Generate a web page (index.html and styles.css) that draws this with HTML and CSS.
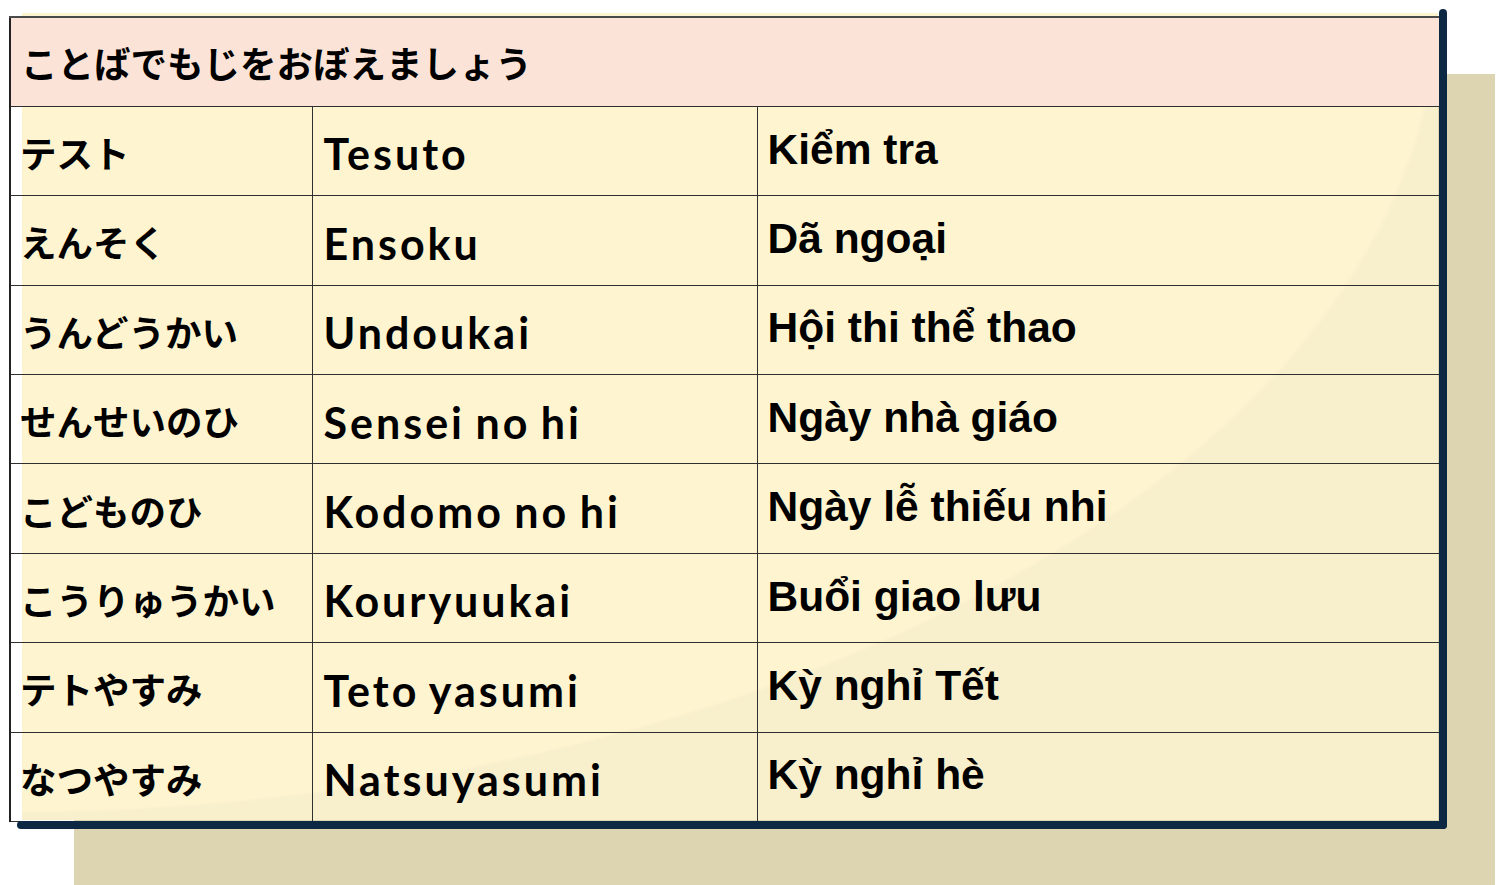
FILE: index.html
```html
<!DOCTYPE html>
<html lang="ja">
<head>
<meta charset="utf-8">
<title>ことばでもじをおぼえましょう</title>
<link rel="stylesheet" href="styles.css">
</head>
<body>
<div class="frame">
  <div class="tan"></div>
  <div class="cream"></div>
  <table class="vocab">
    <colgroup>
      <col class="c1"><col class="c2"><col class="c3">
    </colgroup>
    <thead>
      <tr><th colspan="3" class="title">ことばでもじをおぼえましょう</th></tr>
    </thead>
    <tbody>
      <tr><td class="jp">テスト</td><td class="ro">Tesuto</td><td class="vi">Kiểm tra</td></tr>
      <tr><td class="jp">えんそく</td><td class="ro">Ensoku</td><td class="vi">Dã ngoại</td></tr>
      <tr><td class="jp">うんどうかい</td><td class="ro">Undoukai</td><td class="vi">Hội thi thể thao</td></tr>
      <tr><td class="jp">せんせいのひ</td><td class="ro">Sensei no hi</td><td class="vi">Ngày nhà giáo</td></tr>
      <tr><td class="jp">こどものひ</td><td class="ro">Kodomo no hi</td><td class="vi">Ngày lễ thiếu nhi</td></tr>
      <tr><td class="jp">こうりゅうかい</td><td class="ro">Kouryuukai</td><td class="vi">Buổi giao lưu</td></tr>
      <tr><td class="jp">テトやすみ</td><td class="ro">Teto yasumi</td><td class="vi">Kỳ nghỉ Tết</td></tr>
      <tr><td class="jp">なつやすみ</td><td class="ro">Natsuyasumi</td><td class="vi">Kỳ nghỉ hè</td></tr>
    </tbody>
  </table>
  <span class="edge edge-right"></span>
  <span class="edge edge-bottom"></span>
</div>
</body>
</html>
```

FILE: styles.css
```css
html, body {
  margin: 0;
  padding: 0;
  background: #ffffff;
  overflow: hidden;
  width: 1508px;
  height: 885px;
}

.frame {
  position: relative;
  margin: 16px 0 0 9px;
  width: 1431px;
  height: 805px;
}

.tan {
  position: absolute;
  left: 65px;
  top: 58px;
  width: 1421px;
  height: 811px;
  background: #ddd4b1;
  z-index: 0;
}

.cream {
  position: absolute;
  left: 13px;
  top: -3px;
  width: 1416px;
  height: 807px;
  background: radial-gradient(ellipse 1440px 814px at -22px -13px, #fff4d0 99.6%, #f8efcc 100%);
  z-index: 1;
}

.vocab {
  position: relative;
  z-index: 2;
  width: 1431px;
  height: 805px;
  border-collapse: collapse;
  table-layout: fixed;
  color: #000;
}

.vocab tr {
  height: 89.4px;
}

.c1 { width: 302px; }
.c2 { width: 445px; }
.c3 { width: 684px; }

.vocab th, .vocab td {
  border: 1.5px solid #2f2f2f;
  padding: 0;
  line-height: 1.1;
  vertical-align: middle;
  text-align: left;
}

.vocab tr:first-child th {
  border-top: 2px solid #4a4a4a;
}

.vocab td:first-child, .vocab th {
  border-left: 2px solid #222;
}

.title {
  background: #fbe4d7;
  font-family: "Noto Sans CJK JP", sans-serif;
  font-weight: 700;
  font-size: 36.5px;
  padding-left: 10px !important;
  padding-top: 2px !important;
}

.jp {
  font-family: "Noto Sans CJK JP", sans-serif;
  font-weight: 700;
  font-size: 36.5px;
  padding-left: 9px !important;
  padding-top: 4px !important;
}

.ro {
  font-family: Lato, "Noto Sans", sans-serif;
  font-weight: 700;
  font-size: 43px;
  letter-spacing: 3px;
  word-spacing: -3px;
  padding-left: 11px !important;
  padding-top: 6px !important;
}

.vi {
  font-family: "Liberation Sans", Arial, sans-serif;
  font-weight: 700;
  font-size: 42.5px;
  padding-left: 10px !important;
  padding-bottom: 2px !important;
}

.edge {
  position: absolute;
  background: #0c2843;
  border-radius: 4px;
  z-index: 3;
}

.edge-right {
  left: 1430px;
  top: -7px;
  width: 8px;
  height: 820px;
}

.edge-bottom {
  left: 8px;
  top: 805px;
  width: 1430px;
  height: 8px;
}
```
